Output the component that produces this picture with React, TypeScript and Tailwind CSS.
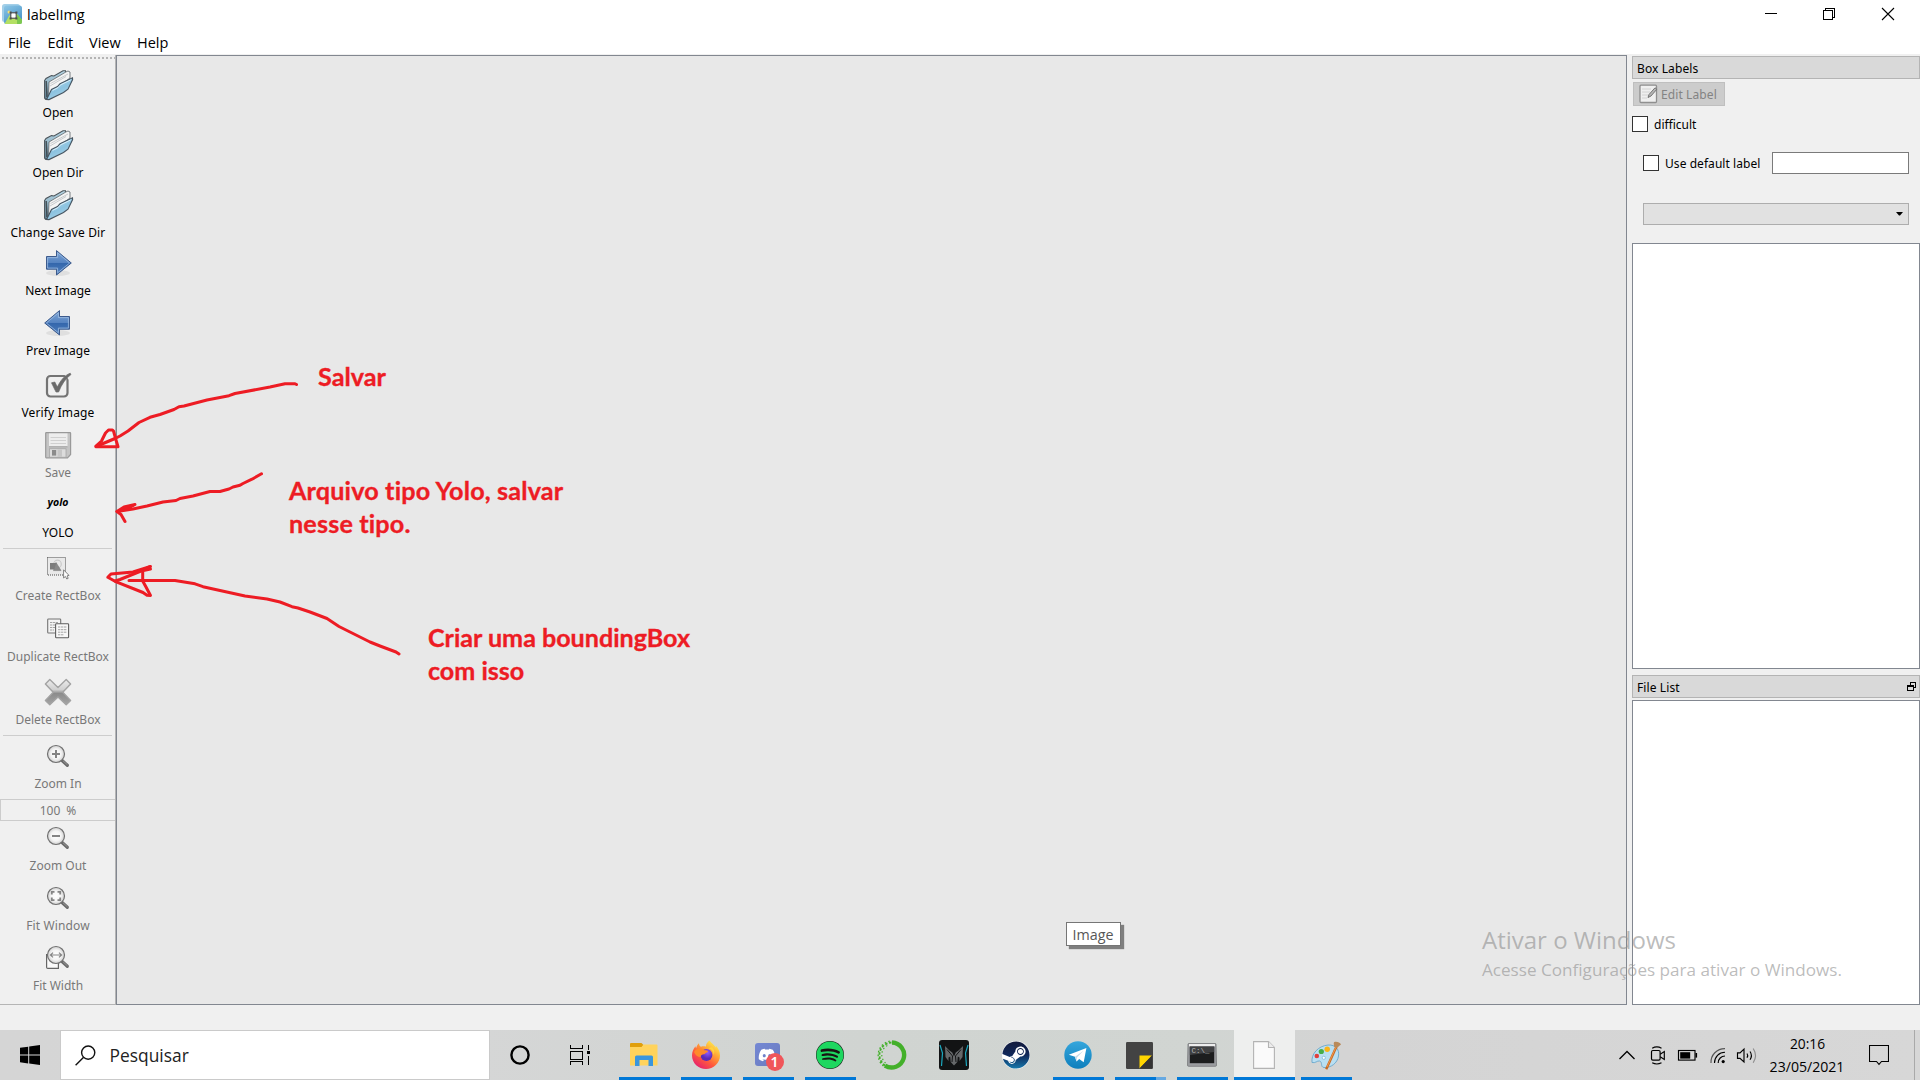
import type { ReactNode } from 'react';
import { FaDiscord, FaSpotify, FaSteam } from 'react-icons/fa';

/* ---------- toolbar icons (32 x 32) ---------- */

function Icon({ children }: { children: ReactNode }) {
  return (
    <svg width="32" height="32" viewBox="0 0 32 32" className="block shrink-0">
      {children}
    </svg>
  );
}

function FolderIcon() {
  return (
    <Icon>
      <path d="M2.6 11.5 L4 9.5 L9.5 6.6 L12 7 L21 1.8 L23.5 1.8 L24 6 L9 27.5 L3.5 30.3 L2.6 29 Z" fill="url(#folderBack)" stroke="#4b545a" strokeWidth="1.1" />
      <path d="M7 13 L23.5 3.2 L26 2 L28 3 L28 9 L10 22 L6.5 27 Z" fill="#f4f4f4" stroke="#6d7478" strokeWidth="0.9" />
      <path d="M8.5 14.5 L26 5 M8 17 L24 7.5" stroke="#c3c6c8" strokeWidth="0.9" />
      <path d="M4.2 12 L5 28" stroke="#2e3336" strokeWidth="1.5" opacity="0.75" />
      <path d="M4.6 30.4 L9.5 20.5 L15.5 17.5 L18 14.8 L30.5 8.8 L30.6 10.6 L26 20.2 L21.5 23.5 L7 30.6 Z" fill="url(#folderFront)" stroke="#475561" strokeWidth="1.1" />
      <path d="M10.6 21.4 L16 18.6 L18.5 15.9 L28.8 10.9" stroke="#dff1fa" strokeWidth="0.9" fill="none" />
    </Icon>
  );
}

function ArrowIcon({ left }: { left?: boolean }) {
  return (
    <Icon>
      <g transform={left ? 'translate(32 0) scale(-1 1)' : undefined}>
        <ellipse cx="16" cy="26" rx="12" ry="3" fill="#000" opacity="0.07" />
        <path d="M4.5 9.5 H14.5 V3.6 L29.3 16 L14.5 28 V22.2 H4.5 Z" fill="url(#arrowBlue)" stroke="#3c5a8c" strokeWidth="1" />
        <path d="M5.6 10.6 H15.6 V5.8 L27.6 16 L15.6 25.8 V21.1 H5.6 Z" fill="none" stroke="#9dbbe0" strokeWidth="0.8" />
      </g>
    </Icon>
  );
}

function VerifyIcon() {
  return (
    <Icon>
      <rect x="5" y="7" width="20.5" height="20.5" rx="3.5" fill="none" stroke="#747474" strokeWidth="2.2" />
      <path d="M22 5 L30 3 L28 12 Z" fill="#f0f0f0" />
      <path d="M9.5 13.8 L12.8 13 L15.3 18 C18.5 11.5 22.5 6.5 28.2 4.2 L29 5.5 C23.5 9.5 19.5 15.5 16.6 23 L14 23 Z" fill="#6b6b6b" stroke="#6b6b6b" strokeWidth="0.7" />
    </Icon>
  );
}

function SaveIcon() {
  return (
    <Icon>
      <path d="M3.7 4.2 Q3.7 3.7 4.2 3.7 H28 Q28.6 3.7 28.6 4.2 V25.5 L25.5 28.8 H4.2 Q3.7 28.8 3.7 28 Z" fill="#c4c4c4" stroke="#999" strokeWidth="1.2" />
      <rect x="7" y="4.4" width="18.5" height="13" fill="#ededed" />
      <path d="M8.5 8.5 H24 M8.5 11.5 H24 M8.5 14.5 H24" stroke="#d0d0d0" strokeWidth="1" />
      <path d="M7 17.8 H25.5" stroke="#9d9d9d" strokeWidth="0.9" />
      <rect x="7.5" y="19.8" width="16.5" height="8.4" fill="#dcdcdc" stroke="#a0a0a0" strokeWidth="0.7" />
      <rect x="10" y="21" width="4.2" height="5.6" fill="#8b8b8b" />
      <path d="M15.5 20.5 H20 V27.8 H15.5 Z" fill="#c6c6c6" />
    </Icon>
  );
}

function CreateIcon() {
  return (
    <Icon>
      <rect x="5.5" y="5.5" width="18" height="17.5" fill="#e9e9e9" stroke="#4a4a4a" strokeWidth="1" strokeDasharray="1 1" />
      <circle cx="15.5" cy="12" r="3.8" fill="none" stroke="#c9c9c9" strokeWidth="1.2" />
      <rect x="8" y="11" width="6.5" height="6.5" fill="#7d7d7d" />
      <path d="M14 10.5 L19 18.6 H11.5 Z" fill="#8a8a8a" stroke="#7a7a7a" strokeWidth="0.6" />
      <path d="M21.6 17.8 V26 L23.4 24.4 L24.8 27 L26.2 26.3 L25 23.9 L27 23.4 Z" fill="#fff" stroke="#757575" strokeWidth="0.9" />
    </Icon>
  );
}

function CopyIcon() {
  return (
    <Icon>
      <rect x="5.7" y="6" width="13" height="14" rx="0.8" fill="#f3f3f3" stroke="#747474" strokeWidth="1.1" />
      <path d="M8 9.5 H16 M8 12 H13 M8 14.5 H13 M8 17 H12" stroke="#9b9b9b" strokeWidth="0.9" strokeDasharray="2.4 0.6" />
      <rect x="13.6" y="10.8" width="13" height="14" rx="0.8" fill="#f8f8f8" stroke="#5f5f5f" strokeWidth="1.1" />
      <path d="M16 14 H24.5 M16 16.7 H24.5 M16 19.2 H24.5 M16 21.8 H22" stroke="#9b9b9b" strokeWidth="0.9" strokeDasharray="2.4 0.6" />
    </Icon>
  );
}

function DeleteIcon() {
  return (
    <Icon>
      <path
        d="M7.8 3.6 L16 11.4 L24.2 3.6 L28.6 8 L20.8 16.2 L28.6 24.4 L24.2 28.8 L16 21 L7.8 28.8 L3.4 24.4 L11.2 16.2 L3.4 8 Z"
        fill="url(#crossGrey)"
        stroke="#a3a3a3"
        strokeWidth="1.4"
        strokeLinejoin="round"
      />
    </Icon>
  );
}

function MagnifierIcon({ kind }: { kind: 'in' | 'out' | 'window' | 'width' }) {
  const cy = kind === 'width' ? 13 : 14;
  return (
    <Icon>
      {kind === 'width' && <path d="M4.6 12 V25.2 Q4.6 26.4 5.8 26.4 H16.4 V20" fill="#fafafa" stroke="#666" strokeWidth="1.2" />}
      <path d={`M19.8 ${cy + 6.3} L25.3 ${cy + 11.3}`} stroke="#6a6a6a" strokeWidth="3.2" strokeLinecap="round" />
      <path d={`M21 ${cy + 6.8} L25.4 ${cy + 10.8}`} stroke="#a9a9a9" strokeWidth="0.7" />
      <circle cx="14" cy={cy} r="8.5" fill="url(#lens)" stroke="#717171" strokeWidth="1.2" />
      {kind === 'in' && <path d="M10 14 H18 M14 10 V18" stroke="#858585" strokeWidth="2" />}
      {kind === 'out' && <path d="M10 14 H18" stroke="#858585" strokeWidth="2" />}
      {kind === 'window' && (
        <path d="M9.8 12.5 V9.8 H12.5 M15.5 9.8 H18.2 V12.5 M18.2 15.5 V18.2 H15.5 M12.5 18.2 H9.8 V15.5" fill="none" stroke="#858585" strokeWidth="1.8" />
      )}
      {kind === 'width' && <path d="M8.5 13 H19.5 M11 10.6 L8.4 13 L11 15.4 M17 10.6 L19.6 13 L17 15.4" fill="none" stroke="#858585" strokeWidth="1.2" />}
    </Icon>
  );
}

function Gradients() {
  return (
    <svg width="0" height="0" className="absolute">
      <defs>
        <linearGradient id="folderBack" x1="0" y1="0" x2="0" y2="1">
          <stop offset="0" stopColor="#b9d9e8" />
          <stop offset="1" stopColor="#5e8296" />
        </linearGradient>
        <linearGradient id="folderFront" x1="0" y1="0" x2="0.6" y2="1">
          <stop offset="0" stopColor="#c5e4f3" />
          <stop offset="0.6" stopColor="#8cc3e0" />
          <stop offset="1" stopColor="#a9d4ea" />
        </linearGradient>
        <linearGradient id="arrowBlue" x1="0" y1="0" x2="0" y2="1">
          <stop offset="0" stopColor="#7ea6d6" />
          <stop offset="0.5" stopColor="#5583c1" />
          <stop offset="0.52" stopColor="#3467ac" />
          <stop offset="1" stopColor="#4f7fbe" />
        </linearGradient>
        <linearGradient id="crossGrey" x1="0" y1="0" x2="0" y2="1">
          <stop offset="0" stopColor="#ececec" />
          <stop offset="0.4" stopColor="#cfcfcf" />
          <stop offset="0.55" stopColor="#8c8c8c" />
          <stop offset="1" stopColor="#a4a4a4" />
        </linearGradient>
        <radialGradient id="lens">
          <stop offset="0" stopColor="#ffffff" />
          <stop offset="0.6" stopColor="#f4f4f4" />
          <stop offset="1" stopColor="#cfcfcf" />
        </radialGradient>
        <linearGradient id="appSky" x1="0" y1="0" x2="0.5" y2="1">
          <stop offset="0" stopColor="#8cc6e6" />
          <stop offset="1" stopColor="#4a94c8" />
        </linearGradient>
      </defs>
    </svg>
  );
}

/* ---------- left toolbar ---------- */

function Tool({ icon, label, className, disabled }: { icon: ReactNode; label: string; className: string; disabled?: boolean }) {
  return (
    <div className={`flex shrink-0 flex-col items-center justify-end gap-1 pl-px ${className} ${disabled ? 'text-[#787878]' : 'text-black'}`}>
      {icon}
      <span className="h-4 whitespace-nowrap text-[12px] leading-4">{label}</span>
    </div>
  );
}

function Separator({ className }: { className: string }) {
  return (
    <div className={`shrink-0 pr-[3px] pl-[3px] pt-[7px] ${className}`}>
      <div className="h-px bg-[#cdcdcd]" />
    </div>
  );
}

function Toolbar() {
  return (
    <aside className="flex w-[116px] shrink-0 flex-col border-r border-b border-[#b5b5b5] bg-[#f0f0f0] font-['Noto_Sans',sans-serif]">
      <div className="h-1.5 shrink-0 pt-0.5 pl-0.5">
        <div className="h-0.5 bg-[repeating-linear-gradient(90deg,#b4b4b4_0_2px,transparent_2px_4px)]" />
      </div>
      <Tool className="h-[60px]" icon={<FolderIcon />} label="Open" />
      <Tool className="h-[60px]" icon={<FolderIcon />} label="Open Dir" />
      <Tool className="h-[60px] tracking-[0.16px]" icon={<FolderIcon />} label="Change Save Dir" />
      <Tool className="h-[58px]" icon={<ArrowIcon />} label="Next Image" />
      <Tool className="h-[60px]" icon={<ArrowIcon left />} label="Prev Image" />
      <Tool className="h-[62px] tracking-[0.14px]" icon={<VerifyIcon />} label="Verify Image" />
      <Tool className="h-[60px]" icon={<SaveIcon />} label="Save" disabled />
      <Tool
        className="h-[60px]"
        icon={
          <span className="flex h-8 items-center pb-1 font-['Open_Sans',sans-serif] text-[10.5px] font-bold text-black italic">yolo</span>
        }
        label="YOLO"
      />
      <Separator className="h-[11px]" />
      <Tool className="h-[52px]" icon={<CreateIcon />} label="Create RectBox" disabled />
      <Tool className="h-[61px]" icon={<CopyIcon />} label="Duplicate RectBox" disabled />
      <Tool className="h-[63px]" icon={<DeleteIcon />} label="Delete RectBox" disabled />
      <Separator className="h-3" />
      <Tool className="h-[52px]" icon={<MagnifierIcon kind="in" />} label="Zoom In" disabled />
      <div className="mt-[7px] flex h-[22px] shrink-0 items-center justify-center border-y border-l border-[#cccccc] pt-0.5 text-[12px] tracking-[0.1px] [word-spacing:2.5px] text-[#787878]">
        100 %
      </div>
      <Tool className="h-[53px]" icon={<MagnifierIcon kind="out" />} label="Zoom Out" disabled />
      <Tool className="h-[60px] tracking-[0.14px]" icon={<MagnifierIcon kind="window" />} label="Fit Window" disabled />
      <Tool className="h-[60px]" icon={<MagnifierIcon kind="width" />} label="Fit Width" disabled />
    </aside>
  );
}

/* ---------- title and menu ---------- */

function TitleBar() {
  return (
    <header className="flex h-[30px] shrink-0 items-center bg-white pl-0.5">
      <svg width="20" height="20" viewBox="0 0 20 20" className="-mt-0.5">
        <rect x="0" y="0" width="18" height="18" rx="2.5" fill="#a3cfe8" />
        <rect x="2" y="1.5" width="18" height="18.5" rx="2.5" fill="url(#appSky)" />
        <path d="M2.5 20 L7.5 11 L10 14 L15 10 L20 16 V17.5 Q20 20 17.5 20 Z" fill="#b4e064" />
        <path d="M15 10 L20 16 V17.5 Q20 20 17.5 20 H15 Z" fill="#7cc850" />
        <circle cx="7" cy="8" r="1.5" fill="#f3e07a" />
        <rect x="8.8" y="8.8" width="5.4" height="5.4" fill="#fff" stroke="#4a4a4a" strokeWidth="1.1" />
        <path d="M7.6 7.6h2v2h-2z M13.4 7.6h2v2h-2z M7.6 13.4h2v2h-2z M13.4 13.4h2v2h-2z" fill="#4a4a4a" />
      </svg>
      <span className="ml-[5px] text-[14.5px] leading-[30px]">labelImg</span>
      <svg width="130" height="20" viewBox="0 0 130 20" className="mr-[25px] ml-auto" fill="none" stroke="#000" shapeRendering="crispEdges">
        <path d="M0 8.5 H12" />
        <path d="M58.5 5.5 h9 v9 h-9 z M60.5 5.5 v-2 h9 v9 h-2" />
        <path d="M117 3 L129 15 M129 3 L117 15" shapeRendering="auto" strokeWidth="1.1" />
      </svg>
    </header>
  );
}

function MenuBar() {
  return (
    <nav className="flex h-6 shrink-0 items-center bg-white pt-0.5 pl-2 text-[14.5px] leading-[22px]">
      <span className="w-[39.5px]">File</span>
      <span className="w-[41.5px]">Edit</span>
      <span className="w-[48px]">View</span>
      <span>Help</span>
    </nav>
  );
}

/* ---------- right docks ---------- */

function DockHeader({ title, children }: { title: string; children?: ReactNode }) {
  return (
    <div className="flex h-[23px] shrink-0 items-center justify-between border border-[#b4b4b4] bg-[#d9d9d9] pr-1 pl-1 text-[12px] text-black">
      <span className="pt-0.5 tracking-[0.1px]">{title}</span>
      {children}
    </div>
  );
}

function Docks() {
  return (
    <aside className="ml-[5px] flex flex-1 flex-col pt-px font-['Noto_Sans',sans-serif] text-[12px]">
      <DockHeader title="Box Labels" />
      <div className="mt-[3px] ml-px flex h-6 w-[92px] shrink-0 items-center border border-[#bfbfbf] bg-[#cccccc] pl-[5px] text-[#838383]">
        <svg width="19" height="20" viewBox="0 0 19 20">
          <rect x="1" y="1.2" width="16.5" height="17.3" rx="1" fill="#efefef" stroke="#8f8f8f" strokeWidth="1.3" />
          <path d="M3 5 H12 M3 8 H11 M3 11 H9 M3 14 H8" stroke="#d2d2d2" />
          <path d="M9 13.5 L10 10.5 L16 3.8 L17.8 5.3 L12 12 Z" fill="#b5b5b5" stroke="#6b6b6b" strokeWidth="0.9" />
        </svg>
        <span className="ml-[3px] pt-0.5 tracking-[0.1px]">Edit Label</span>
      </div>
      <div className="mt-[10px] flex h-4 shrink-0 items-center">
        <span className="size-4 border border-[#333] bg-white" />
        <span className="ml-1.5 pt-0.5">difficult</span>
      </div>
      <div className="mt-5 mr-[11px] ml-[11px] flex h-[22px] shrink-0 items-center">
        <span className="size-4 border border-[#333] bg-white" />
        <span className="ml-1.5 w-[107px] pt-0.5 tracking-[0.06px]">Use default label</span>
        <span className="h-[22px] flex-1 border border-[#7a7a7a] bg-white" />
      </div>
      <div className="mt-[29px] mr-[11px] ml-[11px] flex h-[22px] shrink-0 items-center justify-end border border-[#adadad] bg-[#e1e1e1] pr-[5px]">
        <svg width="7" height="4" viewBox="0 0 7 4">
          <path d="M0 0 H7 L4 3.6 H3 Z" fill="#000" />
        </svg>
      </div>
      <div className="mt-[18px] h-[426px] shrink-0 border border-[#828790] bg-white" />
      <div className="h-1.5 shrink-0" />
      <DockHeader title="File List">
        <svg width="9" height="10" viewBox="0 0 9 10" fill="none" stroke="#000" shapeRendering="crispEdges" className="-mt-px -mr-px">
          <path d="M3 1.5 H9 M3.5 1 V4 M8.5 1 V6.5 M7 6.5 H9" />
          <path d="M0.5 4.5 H6.5 V9.5 H0.5 Z M0 5.5 H6" />
        </svg>
      </DockHeader>
      <div className="mt-0.5 flex-1 border border-[#828790] bg-white" />
    </aside>
  );
}

/* ---------- taskbar ---------- */

function Task({ children, bar, active }: { children: ReactNode; bar?: 'full' | 'stacked'; active?: boolean }) {
  return (
    <div className="relative flex h-[50px] w-[62px] shrink-0 items-center justify-center pr-[3px]">
      {active && <div className="absolute inset-y-0 left-0 w-[61px] bg-[#eeefee]" />}
      <div className="relative flex">{children}</div>
      {bar && !active && (
        <div className="absolute bottom-0 left-[5px] flex h-[3px] w-[51px] bg-[#0078d7]">
          {bar === 'stacked' && <div className="ml-auto w-2.5 bg-[#66a9e2]" />}
        </div>
      )}
      {active && <div className="absolute bottom-0 left-0 h-[3px] w-[61px] bg-[#0078d7]" />}
    </div>
  );
}

function ExplorerIcon() {
  return (
    <svg width="28" height="24" viewBox="0 0 28 24">
      <path d="M0 1 Q0 0 1 0 H11.5 L13.5 2 L12 5 H0 Z" fill="#e09f0b" />
      <path d="M0 4 H11.5 L13.5 1.5 H26.5 Q27.5 1.5 27.5 2.5 V22.5 H0 Z" fill="#ffd35c" />
      <path d="M5 23 V14 Q5 12.5 6.5 12.5 H21.5 Q23 12.5 23 14 V23 H18.5 V17 H9.5 V23 Z" fill="#3a96dd" />
    </svg>
  );
}

function FirefoxIcon() {
  return (
    <svg width="30" height="30" viewBox="0 0 30 30">
      <defs>
        <linearGradient id="ffBody" x1="0.85" y1="0.05" x2="0.2" y2="0.95">
          <stop offset="0" stopColor="#fff44f" />
          <stop offset="0.35" stopColor="#ffa436" />
          <stop offset="0.65" stopColor="#ff5a3c" />
          <stop offset="1" stopColor="#e5206f" />
        </linearGradient>
        <radialGradient id="ffGlobe" cx="0.6" cy="0.3">
          <stop offset="0" stopColor="#9059ff" />
          <stop offset="1" stopColor="#5b2bb8" />
        </radialGradient>
      </defs>
      <path d="M18.5 0.5 C20 3 23 4.5 24.8 7.5 C25 6.8 24.9 6.2 24.7 5.6 C27.5 8.5 29 12 29 15.5 C29 23 22.5 29 15 29 C7.5 29 1 23.2 1 15.5 C1 11.5 2.6 8.5 4.6 6.2 C4.6 7 4.8 7.8 5.1 8.3 C5.5 6.3 6.6 4.6 8 3.2 C8 4.9 8.8 6 10 6.8 C11.5 6.2 13.5 6.2 15 6.6 C14.9 4.2 16.2 1.8 18.5 0.5 Z" fill="url(#ffBody)" />
      <circle cx="15.4" cy="15" r="6" fill="url(#ffGlobe)" />
      <path d="M3 12 C6 7.5 11 8 13.5 10.3 C15.5 10.3 16.7 10.6 17 11.4 C16.6 12.6 14.2 12.8 13.4 14.3 C11.6 14 9.8 15 9.6 17 C7 17 4 15 3 12 Z" fill="#ff8a2b" />
      <path d="M17.5 8.2 C21 9 23 12 22.4 15.5 C24 12.5 23.5 9.5 21 7 Z" fill="#ffd43d" />
    </svg>
  );
}

function DiscordIcon() {
  return (
    <span className="relative flex h-[30px] w-[26px]">
      <span className="mt-[3px] flex h-[23px] w-[25px] items-center justify-center rounded-[3px] bg-gradient-to-br from-[#7488d4] to-[#6a7bbf]">
        <FaDiscord className="size-[18px] text-white" />
      </span>
      <span className="absolute top-[13px] left-[11px] flex size-[18px] items-center justify-center rounded-full bg-[#f0565a] font-['Noto_Sans',sans-serif] text-[14px] leading-none font-semibold text-white">
        1
      </span>
    </span>
  );
}

function AnacondaIcon() {
  return (
    <svg width="30" height="30" viewBox="0 0 30 30" fill="none" stroke="#43b02a">
      <path d="M15 2.5 A12.5 12.5 0 1 1 8 25.6" strokeWidth="4.4" />
      <path d="M8 25.4 A12.5 12.5 0 0 1 15 2.5" strokeWidth="1.8" strokeDasharray="2.5 1.6" />
      <path d="M6.5 26 A14 14 0 0 1 13 1.2" strokeWidth="1.3" strokeDasharray="1.6 2.2" />
      <path d="M8.6 23 A10.6 10.6 0 0 1 12 4.8" strokeWidth="1.2" strokeDasharray="1.4 2.4" />
    </svg>
  );
}

function PredatorIcon() {
  return (
    <svg width="30" height="30" viewBox="0 0 30 30">
      <rect width="30" height="30" rx="3" fill="#121314" />
      <path d="M1 5 L3.5 13 L2.5 26" stroke="#1ba8bf" strokeWidth="1.2" fill="none" />
      <path d="M29 5 L26.5 13 L27.5 26" stroke="#1ba8bf" strokeWidth="1.2" fill="none" />
      <path d="M6 6 L10.5 10.5 L13.3 12.5 L15 16.5 L16.7 12.5 L19.5 10.5 L24 6 L23.5 17 L20.5 21 V17.5 L18.8 16.5 L18.3 22 L15 25.5 L11.7 22 L11.2 16.5 L9.5 17.5 V21 L6.5 17 Z" fill="#66686a" />
      <path d="M8 9.5 L13.5 16 L13 22 M22 9.5 L16.5 16 L17 22" stroke="#121314" strokeWidth="1" fill="none" />
    </svg>
  );
}

function SteamIcon() {
  return (
    <span className="flex size-7 rounded-full bg-white">
      <svg width="0" height="0" className="absolute">
        <linearGradient id="steamBlue" x1="0" y1="0" x2="0" y2="1">
          <stop offset="0" stopColor="#121a3c" />
          <stop offset="0.5" stopColor="#10285a" />
          <stop offset="1" stopColor="#1577ab" />
        </linearGradient>
      </svg>
      <FaSteam className="size-7 [&_path]:fill-[url(#steamBlue)]" />
    </span>
  );
}

function TelegramIcon() {
  return (
    <svg width="28" height="28" viewBox="0 0 28 28">
      <defs>
        <linearGradient id="tgBlue" x1="0" y1="0" x2="0" y2="1">
          <stop offset="0" stopColor="#35a6dc" />
          <stop offset="1" stopColor="#0d7fbd" />
        </linearGradient>
      </defs>
      <circle cx="14" cy="14" r="13.7" fill="url(#tgBlue)" />
      <path d="M4.8 13.7 L22.4 7 L19.7 21.2 L15.2 18 L12.5 20.6 L11 15.8 Z" fill="#fff" />
      <path d="M11 15.8 L19.5 9.8 L13 16.6 L12.5 20.6 Z" fill="#c4dcea" />
    </svg>
  );
}

function NotesIcon() {
  return (
    <svg width="27" height="27" viewBox="0 0 27 27">
      <rect width="27" height="27" rx="1.2" fill="#434343" />
      <path d="M13.5 26.5 V13.5 H26 Z" fill="#ffd500" />
      <path d="M13.5 26.5 L26 13.5 V26.5 Z" fill="#343434" />
    </svg>
  );
}

function ConsoleIcon() {
  return (
    <span className="relative flex">
      <svg width="30" height="24" viewBox="0 0 30 24">
        <path d="M1 1 Q1 0.5 2 0.5 H28 Q29 0.5 29 1 L29.5 22 Q29.5 23.3 28.5 23.3 H1.5 Q0.5 23.3 0.5 22 Z" fill="#9b9da0" stroke="#77797b" strokeWidth="0.8" />
        <rect x="2" y="1" width="26" height="2.4" fill="#ededed" />
        <rect x="2.8" y="3.6" width="24.4" height="16.6" fill="#1c1d1e" />
        <path d="M2.8 12 L27.2 9 V3.6 H2.8 Z" fill="#4c4e50" opacity="0.75" />
      </svg>
      <span className="absolute top-[4px] left-[5px] font-['Liberation_Mono',monospace] text-[7.5px] leading-[9px] text-[#b5b5b5]">C:\_</span>
    </span>
  );
}

function PageIcon() {
  return (
    <svg width="22" height="28" viewBox="0 0 22 28">
      <path d="M0.6 0.6 H15.5 L21.4 6.5 V27.4 H0.6 Z" fill="#fafafa" stroke="#b3b3b3" strokeWidth="1.1" />
      <path d="M15.5 0.6 V6.5 H21.4" fill="#ececec" stroke="#b3b3b3" strokeWidth="1.1" />
    </svg>
  );
}

function PaintIcon() {
  return (
    <svg width="30" height="29" viewBox="0 0 30 29">
      <path d="M1 21.5 C0 13 7 5 17 4 C25 3.5 28.5 9 27.5 15 C26.5 22 20 27 13 26.5 C9 26 12 21 8.5 20 C6 19.5 4.5 22.5 1 21.5 Z" fill="#b9dff2" stroke="#6aa7cc" strokeWidth="0.9" />
      <circle cx="5.8" cy="15" r="2.3" fill="#e0403c" />
      <circle cx="10.3" cy="10.5" r="2.6" fill="#46ae49" />
      <circle cx="16.2" cy="8.3" r="2.7" fill="#fbb416" />
      <circle cx="12.8" cy="16.8" r="1.6" fill="#fff" stroke="#6aa7cc" strokeWidth="0.6" />
      <path d="M25.5 5.5 L15.2 28.3" stroke="#c96a22" strokeWidth="2.4" />
      <path d="M25 6 L16 26" stroke="#f7a35a" strokeWidth="0.8" />
      <path d="M23 1.2 C25.5 0.2 29 1.5 30 3.5 C28.5 4.2 28 5.8 25.5 7 L22.8 5.6 C23.5 4 22.2 2.8 23 1.2 Z" fill="#b98a5a" />
    </svg>
  );
}

function TrayIcons() {
  return (
    <svg width="142" height="24" viewBox="0 0 142 24" fill="none" stroke="#000" strokeWidth="1.15" className="mt-px">
      <path d="M0.5 15 L8 7.5 L15.5 15" strokeWidth="1.3" />
      <g>
        <rect x="32.5" y="6.5" width="8.6" height="9.6" rx="1.3" strokeWidth="1.2" />
        <path d="M41.2 10.3 L45.3 7.6 V15.4 L41.2 12.7" />
        <path d="M33.2 4.2 Q37.8 1.6 42.5 4.2 M33.2 18.8 Q37.8 21.2 42.5 18.8" />
      </g>
      <g>
        <rect x="59.5" y="6.5" width="16.5" height="9.6" />
        <rect x="61.2" y="8.2" width="10" height="6.4" fill="#000" stroke="none" />
        <path d="M77.3 9 V13.6" strokeWidth="1.6" />
      </g>
      <g>
        <path d="M92 19 C91.5 11 98 4.5 106 4.6" stroke="#555" />
        <path d="M95.5 19 C95.5 13 100 8.2 106 8.2" />
        <path d="M99.2 19 C99.2 15 102.2 12 106 12" />
        <circle cx="104.2" cy="17.6" r="1.6" fill="#000" stroke="none" />
      </g>
      <g>
        <path d="M118.5 8.8 H121 L125 5 V18 L121 14.3 H118.5 Z" />
        <path d="M128 9.5 Q129.4 11.5 128 13.8" />
        <path d="M131 7.5 Q133.8 11.5 131 15.8" />
        <path d="M134.2 4.5 Q138.8 11.5 134.2 18.8" stroke="#8d8d8d" />
      </g>
    </svg>
  );
}

function Taskbar() {
  return (
    <footer className="flex h-[50px] shrink-0 bg-[linear-gradient(90deg,#d5d5d5_0%,#d5d6d6_25%,#d0d4d1_45%,#d1d5d2_63%,#d4d4d4_70%,#d7d7d7_100%)]">
      <div className="flex w-[60px] shrink-0 items-center justify-center">
        <svg width="20" height="20" viewBox="0 0 20 20">
          <path d="M0 2.8 L8.2 1.7 V9.5 H0 Z M9.2 1.5 L20 0 V9.5 H9.2 Z M0 10.5 H8.2 V18.4 L0 17.3 Z M9.2 10.5 H20 V20 L9.2 18.5 Z" />
        </svg>
      </div>
      <div className="flex w-[430px] shrink-0 items-center border border-[#cacaca] bg-white pl-[14px]">
        <svg width="21" height="21" viewBox="0 0 21 21" fill="none" stroke="#111" strokeWidth="1.4">
          <circle cx="13.2" cy="7.6" r="6.6" />
          <path d="M8.4 12.4 L0.6 20.2" />
        </svg>
        <span className="ml-[13.5px] pt-px text-[17.4px] text-[#222]">Pesquisar</span>
      </div>
      <div className="flex w-[60px] shrink-0 items-center justify-center">
        <svg width="22" height="22" viewBox="0 0 22 22">
          <circle cx="11" cy="11" r="8.6" fill="none" stroke="#000" strokeWidth="2.4" />
        </svg>
      </div>
      <div className="flex w-[64px] shrink-0 items-center pl-5">
        <svg width="20" height="20" viewBox="0 0 20 20" fill="none" stroke="#000" shapeRendering="crispEdges">
          <path d="M0.5 0 V3.5 H12.5 V0 M0.5 20 V16.5 H12.5 V20 M0.5 6.5 H12.5 V14 H0.5 Z M18.5 0 V4.5 M18.5 11 V20" />
          <path d="M17 6 H20 V9 H17 Z" fill="#000" stroke="none" />
        </svg>
      </div>
      <Task bar="full"><ExplorerIcon /></Task>
      <Task bar="full"><FirefoxIcon /></Task>
      <Task bar="full"><DiscordIcon /></Task>
      <Task bar="full">
        <span className="flex size-7 items-center justify-center rounded-full bg-[#191414]">
          <FaSpotify className="size-7 text-[#1ed760]" />
        </span>
      </Task>
      <Task><AnacondaIcon /></Task>
      <Task><PredatorIcon /></Task>
      <Task><SteamIcon /></Task>
      <Task bar="full"><TelegramIcon /></Task>
      <Task bar="stacked"><NotesIcon /></Task>
      <Task bar="full"><ConsoleIcon /></Task>
      <Task bar="full" active><PageIcon /></Task>
      <Task bar="full"><PaintIcon /></Task>
      <div className="ml-auto flex items-center">
        <TrayIcons />
        <div className="ml-1 flex w-[84px] flex-col items-center text-[14px] leading-[23px]">
          <span className="pl-px text-[13.8px]">20:16</span>
          <span className="text-[14.1px]">23/05/2021</span>
        </div>
        <svg width="20" height="21" viewBox="0 0 20 21" fill="none" stroke="#000" strokeWidth="1.1" className="ml-5">
          <path d="M0.5 0.5 H19.5 V16.5 H12.5 L10 19.3 L7.5 16.5 H0.5 Z" />
        </svg>
        <div className="ml-[25px] h-[50px] w-1.5 border-l border-[#a9a9a9]" />
      </div>
    </footer>
  );
}

/* ---------- hand-drawn notes over the window ---------- */

function Note({ className, lines }: { className: string; lines: string[] }) {
  return (
    <div
      className={`absolute font-['Lato',sans-serif] leading-[33px] font-bold whitespace-nowrap text-[#ed1c24] [font-variant-ligatures:none] [-webkit-text-stroke:0.35px_#ed1c24] ${className}`}
    >
      {lines.map((line) => (
        <p key={line}>{line}</p>
      ))}
    </div>
  );
}

function Annotations() {
  return (
    <>
      <svg
        width="1920"
        height="1080"
        viewBox="0 0 1920 1080"
        className="pointer-events-none absolute inset-0"
        fill="none"
        stroke="#ed1c24"
        strokeWidth="3"
        strokeLinecap="round"
        strokeLinejoin="round"
      >
        <path d="M296.5 384.5 L295 383.7 L285 383.7 L270 387 L235 393.5 L229 395.7 L207 400 L184 406 L179 406.7 L174 409.5 L160 414.5 L150 417.3 L139 422.5 L128 431 L120 436 L115 438.5 L96 446.5" />
        <path d="M96 446.7 H118 L116 440 L113.5 431 L112.5 430 H108.5 L105.5 433 L101.5 441 L96 446" />
        <path d="M261.5 473.8 L252 479.2 L243 483.5 L240 485.3 L233 487 L229 489 L220 491.5 H210 L193 496 L180 498.5 L176 500.5 L163 502 L147 506 L133 509 L117 511.5" />
        <path d="M117 511.5 L124 507 L135 504.5 L126 509.5 M117 511.5 L121 514.5 L125 521.5 M119 510.5 L131 505.5" />
        <path d="M399 654 L396 652 L380 646 L370 642 L353 633.5 L339 626.5 L327 618.5 L310 612 L298 608 L292 606.7 L280 602 L267 599 L245 596 L220 590.5 L203 586.7 L195 583.8 L175 580.4 H129" />
        <path d="M150.5 566.5 L133 572 L111 574 L107.8 577.3 L115 581.3 L143 592.5 L147 595.3 L150.5 595.5 L146 587 L142.7 581 V570.5" />
        <path d="M115 581 L120 579.5 L141 571 L150.5 569 M143 570 L149.5 566.8" />
      </svg>
      <Note className="top-[360px] left-[318px] text-[25.2px]" lines={['Salvar']} />
      <Note className="top-[474px] left-[289px] text-[25.2px] tracking-[0.15px]" lines={['Arquivo tipo Yolo, salvar', 'nesse tipo.']} />
      <Note className="top-[621px] left-[428px] text-[25.1px]" lines={['Criar uma boundingBox', 'com isso']} />
    </>
  );
}

export default function App() {
  return (
    <div className="relative flex h-[1080px] w-[1920px] flex-col overflow-hidden bg-[#f0f0f0] font-['Open_Sans',sans-serif] text-black">
      <Gradients />
      <TitleBar />
      <MenuBar />
      <main className="flex h-[951px] shrink-0 pt-px">
        <Toolbar />
        <section className="w-[1511px] shrink-0 border border-[#828790] bg-[#e8e8e8]" />
        <Docks />
      </main>
      <div className="h-[25px] shrink-0" />
      <Taskbar />

      <div className="absolute top-[922px] left-[1066px] flex h-6 w-[55px] items-center justify-center border border-[#767676] bg-white pt-px pr-px text-[14.3px] text-[#575757] shadow-[3px_3px_1px_rgba(0,0,0,0.45)]">
        Image
      </div>
      <div className="absolute top-[924px] left-[1482px] whitespace-nowrap text-[#8f8f8f]/60">
        <p className="text-[24px] leading-8">Ativar o Windows</p>
        <p className="mt-0.5 text-[17.13px] leading-6">Acesse Configurações para ativar o Windows.</p>
      </div>
      <Annotations />
    </div>
  );
}
